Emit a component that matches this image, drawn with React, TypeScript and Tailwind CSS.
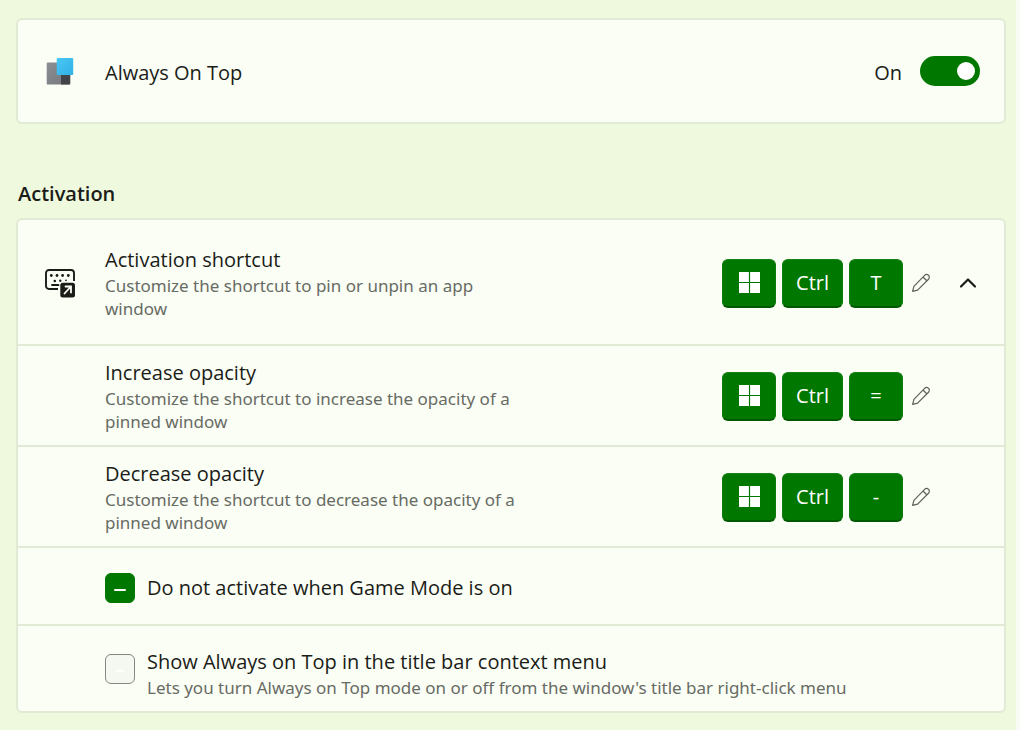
import React, { useEffect, useRef, useState } from 'react';

interface Shortcut {
  id: string;
  title: string;
  description: string;
  lastKey: string;
}

const opacityShortcuts: Shortcut[] = [
  {
    id: 'increase',
    title: 'Increase opacity',
    description: 'Customize the shortcut to increase the opacity of a pinned window',
    lastKey: '=',
  },
  {
    id: 'decrease',
    title: 'Decrease opacity',
    description: 'Customize the shortcut to decrease the opacity of a pinned window',
    lastKey: '-',
  },
];

const AlwaysOnTopIcon = () => (
  <svg width="32" height="32" viewBox="0 0 32 32" aria-hidden="true">
    <defs>
      <linearGradient id="back" x1="0" y1="0" x2="1" y2="1">
        <stop offset="0" stopColor="#8b8e92" />
        <stop offset="1" stopColor="#74777b" />
      </linearGradient>
      <linearGradient id="front" x1="0" y1="0" x2="1" y2="1">
        <stop offset="0" stopColor="#4ac6f4" />
        <stop offset="1" stopColor="#2fb2e6" />
      </linearGradient>
    </defs>
    <rect x="2.700" y="7.500" width="23.500" height="22" rx="1" fill="url(#back)" />
    <path d="M17 19.500h9.200v9a1 1 0 0 1-1 1H17z" fill="#424447" />
    <rect x="12.700" y="3" width="16.500" height="17" rx="1" fill="url(#front)" />
  </svg>
);

const KeyboardIcon = () => (
  <svg width="32" height="30" viewBox="0 0 32 30" fill="none" aria-hidden="true">
    <path
      d="M14 21H5a3 3 0 0 1-3-3V5a3 3 0 0 1 3-3H27a3 3 0 0 1 3 3v8"
      stroke="#1b1c18"
      strokeWidth="1.900"
    />
    <path d="M8 17h6.500" stroke="#1b1c18" strokeWidth="1.800" strokeLinecap="round" />
    <g fill="#1b1c18">
      <circle cx="7.300" cy="7.500" r="1.400" />
      <circle cx="13" cy="7.500" r="1.400" />
      <circle cx="18.600" cy="7.500" r="1.400" />
      <circle cx="24.300" cy="7.500" r="1.400" />
      <circle cx="10.800" cy="13" r="1.300" />
      <circle cx="16.300" cy="12.800" r="1.200" />
      <circle cx="22" cy="12.300" r="0.900" />
      <rect x="16.300" y="14.800" width="14.700" height="14.700" rx="2.500" />
    </g>
    <path d="M20.500 25.500l6-6.500M21.500 18.500h5.500V24.500" stroke="#fbfef5" strokeWidth="1.800" strokeLinecap="round" />
  </svg>
);

const WindowsIcon = () => (
  <svg width="21" height="21" viewBox="0 0 21 21" fill="#fff" aria-hidden="true">
    <path d="M0 0h9.900v9.900H0zM11.100 0H21v9.900h-9.900zM0 11.100h9.900V21H0zM11.100 11.100H21V21h-9.900z" />
  </svg>
);

const PencilIcon = () => (
  <svg width="20" height="20" viewBox="0 0 20 20" fill="none" stroke="#5f625b" strokeWidth="1.200" strokeLinejoin="round" aria-hidden="true">
    <path d="M13.600 2.300a2.700 2.700 0 0 1 3.900 0 2.700 2.700 0 0 1 0 3.900L6.600 17.100 1.600 18.400l1.300-5z" />
    <path d="M12 4l4 4" />
  </svg>
);

const ChevronUpIcon = () => (
  <svg width="18" height="12" viewBox="0 0 18 12" fill="none" aria-hidden="true">
    <path d="M2 9.500l7-7 7 7" stroke="#1b1c18" strokeWidth="2.200" strokeLinecap="round" strokeLinejoin="round" />
  </svg>
);

const Key: React.FC<{ children: React.ReactNode }> = ({ children }) => (
  <kbd className="flex h-[49px] min-w-[54px] items-center justify-center rounded-md border border-t-[#178317] border-x-[#0c7c0c] border-b-2 border-b-[#005800] bg-[#007800] px-[13px] font-[inherit] text-xl text-white">
    {children}
  </kbd>
);

const ShortcutKeys: React.FC<{ name: string; lastKey: string }> = ({ name, lastKey }) => (
  <div className="flex items-center">
    <div className="flex gap-1.5">
      <Key>
        <WindowsIcon />
      </Key>
      <Key>Ctrl</Key>
      <Key>{lastKey}</Key>
    </div>
    <button type="button" aria-label={`Edit ${name}`} className="ml-2 rounded">
      <PencilIcon />
    </button>
  </div>
);

const SettingText: React.FC<{ title: string; description: string }> = ({ title, description }) => (
  <div className="max-w-[430px]">
    <h3 className="text-xl leading-7">{title}</h3>
    <p className="font-['Noto_Sans','Open_Sans',sans-serif] text-[17px] leading-[23px] text-[#686b64]">{description}</p>
  </div>
);

interface CheckProps {
  id: string;
  checked: boolean;
  onChange: (checked: boolean) => void;
}

// Tri-state looking box: the dash stays visible in both states
const CheckBox: React.FC<CheckProps> = ({ id, checked, onChange }) => {
  const ref = useRef<HTMLInputElement>(null);

  useEffect(() => {
    if (ref.current) ref.current.indeterminate = checked;
  }, [checked]);

  return (
    <span className="grid shrink-0 place-items-center">
      <input
        ref={ref}
        id={id}
        type="checkbox"
        checked={checked}
        onChange={() => onChange(!checked)}
        className="peer col-start-1 row-start-1 size-[30px] appearance-none rounded-md border border-[#858882] bg-[#f5f8f0] indeterminate:border-[#007800] indeterminate:bg-[#007800]"
      />
      <span className="pointer-events-none col-start-1 row-start-1 mt-1 h-0.5 w-2 rounded-full bg-white peer-indeterminate:w-3" />
    </span>
  );
};

export default function App() {
  const [enabled, setEnabled] = useState(true);
  const [expanded, setExpanded] = useState(true);
  const [gameMode, setGameMode] = useState(true);
  const [titleBar, setTitleBar] = useState(false);

  return (
    <main className="min-h-screen border-r-4 border-[#f8fbf3] bg-[#eef9dd] pt-[18px] pr-2.5 pb-4 pl-4 font-['Open_Sans','Liberation_Sans',sans-serif] text-xl text-[#1b1c18]">
      {/* Main toggle */}
      <section className="flex h-[106px] items-center rounded-md border-2 border-[#e1ead5] bg-[#fafef5] pr-6 pl-[26px]">
        <div className="w-[61px]">
          <AlwaysOnTopIcon />
        </div>
        <h1 className="pt-1">Always On Top</h1>
        <label htmlFor="enabled" className="ml-auto flex items-center gap-[18px]">
          <span className="pt-1">{enabled ? 'On' : 'Off'}</span>
          <span className="grid items-center">
            <input
              id="enabled"
              type="checkbox"
              role="switch"
              checked={enabled}
              onChange={() => setEnabled(!enabled)}
              className="peer col-start-1 row-start-1 h-[30px] w-[60px] appearance-none rounded-full bg-[#8a8d86] checked:bg-[#007800]"
            />
            <span className="pointer-events-none col-start-1 row-start-1 ml-[5px] size-[18px] rounded-full bg-white peer-checked:ml-[37px]" />
          </span>
        </label>
      </section>

      <h2 className="mt-14 mb-2.5 pl-0.5 leading-7 font-semibold">Activation</h2>

      <section className="divide-y-2 divide-[#e1ead5] rounded-md border-2 border-[#e1ead5] bg-[#fafef5]">
        <div className="flex items-center pt-[26px] pr-[27px] pb-6 pl-[26px]">
          <div className="w-[61px] shrink-0">
            <KeyboardIcon />
          </div>
          <SettingText title="Activation shortcut" description="Customize the shortcut to pin or unpin an app window" />
          <div className="ml-auto flex items-center gap-7">
            <ShortcutKeys name="activation shortcut" lastKey="T" />
            <button type="button" aria-label="Toggle activation details" aria-expanded={expanded} onClick={() => setExpanded(!expanded)}>
              <ChevronUpIcon />
            </button>
          </div>
        </div>

        {expanded &&
          opacityShortcuts.map((item) => (
            <div key={item.id} className="flex items-center justify-between pt-[13px] pr-[73px] pb-3 pl-[87px]">
              <SettingText title={item.title} description={item.description} />
              <ShortcutKeys name={item.title} lastKey={item.lastKey} />
            </div>
          ))}

        {expanded && (
          <div className="flex min-h-[78px] items-center gap-3 pt-1 pl-[87px]">
            <CheckBox id="game-mode" checked={gameMode} onChange={setGameMode} />
            <label htmlFor="game-mode">Do not activate when Game Mode is on</label>
          </div>
        )}

        {expanded && (
          <div className="flex min-h-[85px] items-center gap-3 pl-[87px]">
            <CheckBox id="title-bar" checked={titleBar} onChange={setTitleBar} />
            <label htmlFor="title-bar" className="pt-2.5 leading-7">
              Show Always on Top in the title bar context menu
              <span className="block font-['Noto_Sans','Open_Sans',sans-serif] text-[17px] leading-[23px] text-[#686b64]">
                Lets you turn Always on Top mode on or off from the window's title bar right-click menu
              </span>
            </label>
          </div>
        )}
      </section>
    </main>
  );
}
